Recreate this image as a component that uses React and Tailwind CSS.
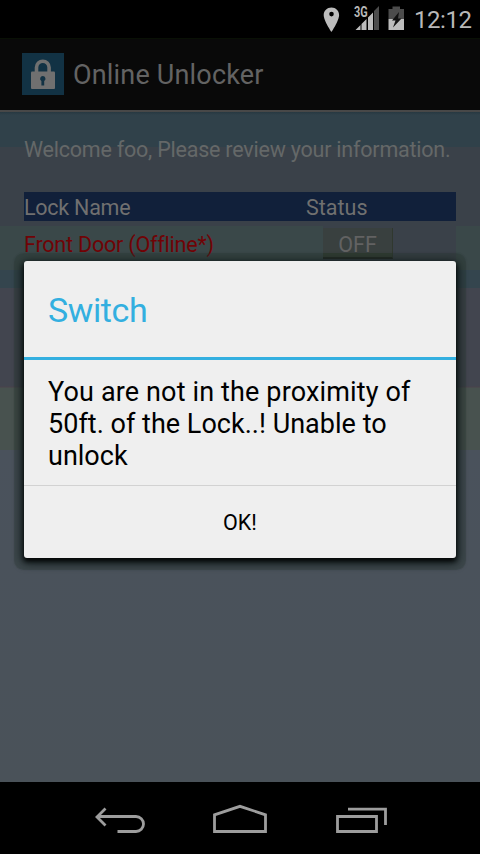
function StatusBar() {
  return (
    <div className="flex h-[38px] shrink-0 items-center bg-black text-[#b8b8b8]">
      <svg className="h-[38px] w-[410px]" viewBox="0 0 410 38" fill="none">
        <path fillRule="evenodd" fill="#bdbdbd" d="M331.5 7.500c-4.400 0-7.800 3.300-7.800 7.600 0 5.700 7.800 17 7.800 17s7.600-11.300 7.600-17c0-4.300-3.300-7.600-7.600-7.600Zm0 4.300a2.300 2.300 0 1 1 0 4.600 2.300 2.300 0 0 1 0-4.600Z" />
        <path fill="#4c4c4c" d="M374 11l5-5v24h-5z" />
        <path fill="#bdbdbd" d="M355.500 30l5-5v5zM361.500 24l5-5v11h-5zM368 17.500l5-5V30h-5z" />
        <text transform="translate(354 17) scale(.78 1)" fill="#b8b8b8" fontSize="14" fontWeight="700" className="font-['Roboto',sans-serif]">3G</text>
        <path fill="#4c4c4c" d="M388.500 9h4V6.500h7.500V9h4v10h-15.500z" />
        <path fill="#bdbdbd" d="M388.500 19h15.500v11h-15.500z" />
        <path fill="#111" d="M399 12l-7 8.500h3.500L393 27.500l8.500-9H398z" />
      </svg>
      <span className="ml-[4px] mt-[1px] whitespace-nowrap font-['Roboto',sans-serif] text-[24px] leading-7 tracking-[-0.45px]">12:12</span>
    </div>
  );
}

function ActionBar() {
  return (
    <header className="flex h-[74px] shrink-0 items-center border-b-2 border-t border-b-[#484848] border-t-[#091005] bg-[#090909] pl-[22px]">
      <svg className="-mt-[1px] h-[42px] w-[42px] shrink-0" viewBox="0 0 42 42" fill="none">
        <rect width="42" height="42" fill="#123244" />
        <path stroke="#707070" strokeWidth="3.600" d="M14.500 20v-5.500a6.300 6.300 0 0 1 12.600 0V20" />
        <rect x="9" y="18.500" width="24" height="17.500" rx="1" fill="#707070" />
        <path fill="#123244" d="M20.800 23a2.700 2.700 0 0 0-1.400 5v4.500h2.800V28a2.700 2.700 0 0 0-1.400-5z" />
      </svg>
      <h1 className="ml-[9px] whitespace-nowrap text-[27px] leading-8 tracking-[0.18px] text-[#636363]">Online Unlocker</h1>
    </header>
  );
}

function Content() {
  return (
    <main className="h-[670px] shrink-0 bg-[linear-gradient(#273841_0,#30414a_3px,#30414a_35px,#3a4149_35px,#3a4149_114px,#3a4849_114px,#3a4849_158px,#34454e_158px,#34454e_176px,#42454f_176px,#42454f_274px,#4a424b_275px,#48524f_276px,#48524f_338px,#4a525c_338px,#4a5259_100%)] px-6 pt-[24px]">
      <p className="h-[56px] whitespace-nowrap text-[21.500px] leading-7 tracking-[-0.22px] text-[#646868]">Welcome foo, Please review your information.</p>
      <div className="flex h-[29px] items-center bg-[#11203a] text-[21.500px] leading-7 text-[#707070]">
        <span className="w-[282px] pt-[2px] tracking-[-0.25px]">Lock Name</span>
        <span className="pt-[2px]">Status</span>
      </div>
      <div className="flex h-[40px] bg-[linear-gradient(#3a4149_5px,transparent_5px)] text-[21.500px] leading-7">
        <span className="w-[299px] pt-[10px] tracking-[-0.2px] text-[#700306]">Front Door (Offline*)</span>
        <div className="flex-1 bg-[#3a4149] pt-[7px]">
          <div className="h-[31px] w-[70px] border-b-2 border-r border-b-[#21251f] border-r-[#30382f] bg-[linear-gradient(#39403f_85%,#343d33_85%)] pt-[3px] text-center text-[#626262]">OFF</div>
        </div>
      </div>
    </main>
  );
}

function Dialog() {
  return (
    <section role="dialog" className="absolute left-6 top-[261px] flex h-[297px] w-[432px] flex-col overflow-visible rounded-[3px] bg-[#efefef] text-black shadow-[0_3px_4px_#060808,0_3px_10px_2px_#0c1516,0_2px_1px_10px_#26352f58]">
      <div className="flex h-[96px] shrink-0 items-center pl-6">
        <h2 className="mt-[2px] whitespace-nowrap text-[34px] leading-10 tracking-[-0.4px] text-[#33afe0]">Switch</h2>
      </div>
      <div className="h-[3px] shrink-0 bg-[#33afe0]" />
      <p className="h-[125px] shrink-0 whitespace-nowrap pl-6 pt-[16px] text-[27px] leading-8">
        <span className="tracking-[0.14px]">You are not in the proximity of</span><br />
        <span className="tracking-[0.02px]">50ft. of the Lock..! Unable to</span><br />unlock
      </p>
      <button className="flex flex-1 items-center justify-center border-t border-[#d2d2d2] pt-[3px] text-[21.500px]">OK!</button>
    </section>
  );
}

function NavBar() {
  return (
    <nav className="h-[72px] bg-black">
      <svg className="h-[72px] w-[480px]" viewBox="0 0 480 72" fill="none" stroke="#9d9d9d" strokeWidth="2.800">
        <path d="M105.500 26.500l-8.500 8.500 8.500 8.500M97.500 34.500H136a7.500 7.500 0 0 1 0 15H117.500" />
        <path d="M214.500 49.500V32.800L240 24.300l25.500 8.500v16.700z" />
        <path d="M337.500 34.500h39v15h-39zM348 27.200h37.500V43" />
      </svg>
    </nav>
  );
}

export default function App() {
  return (
    <div className="relative flex h-[854px] w-[480px] flex-col overflow-hidden bg-black font-['Roboto',sans-serif]">
      <StatusBar />
      <ActionBar />
      <Content />
      <NavBar />
      <Dialog />
    </div>
  );
}
